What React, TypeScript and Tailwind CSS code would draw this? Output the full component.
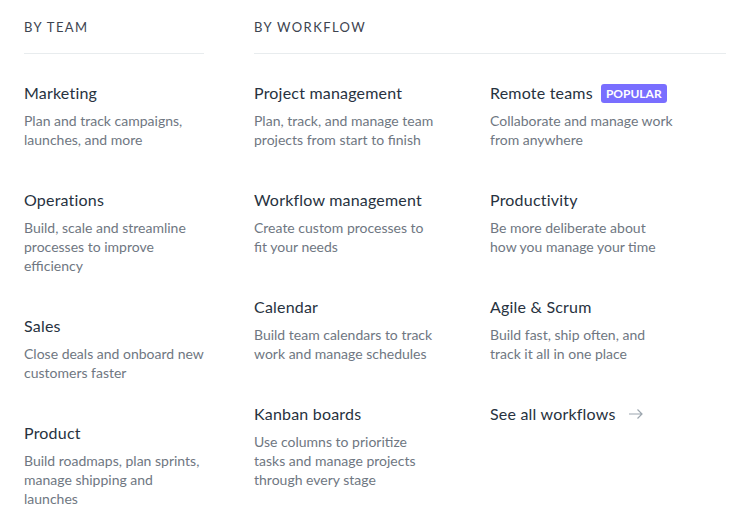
import React from 'react';

type Item = { title: string; desc: string; badge?: string };

const teams: Item[] = [
  { title: 'Marketing', desc: 'Plan and track campaigns, launches, and more' },
  { title: 'Operations', desc: 'Build, scale and streamline processes to improve efficiency' },
  { title: 'Sales', desc: 'Close deals and onboard new customers faster' },
  { title: 'Product', desc: 'Build roadmaps, plan sprints, manage shipping and launches' },
];

const workflows: Item[] = [
  { title: 'Project management', desc: 'Plan, track, and manage team projects from start to finish' },
  { title: 'Remote teams', desc: 'Collaborate and manage work from anywhere', badge: 'POPULAR' },
  { title: 'Workflow management', desc: 'Create custom processes to fit your needs' },
  { title: 'Productivity', desc: 'Be more deliberate about how you manage your time' },
  { title: 'Calendar', desc: 'Build team calendars to track work and manage schedules' },
  { title: 'Agile & Scrum', desc: 'Build fast, ship often, and track it all in one place' },
  { title: 'Kanban boards', desc: 'Use columns to prioritize tasks and manage projects through every stage' },
];

const Entry: React.FC<{ item: Item }> = ({ item }) => (
  <div>
    <div className="flex h-6 items-center gap-2">
      <span className="text-[16px] tracking-[0.2px] text-[#273240]">{item.title}</span>
      {item.badge && (
        <span className="rounded-[3px] bg-[#796eff] px-[5px] text-[12px] font-bold leading-[19px] text-white">
          {item.badge}
        </span>
      )}
    </div>
    <p className="mt-[6px] w-[184px] text-[14px] leading-[19px] text-[#6f7782]">{item.desc}</p>
  </div>
);

const Heading: React.FC<{ label: string }> = ({ label }) => (
  <div className="border-b border-[#e8ecee] pb-[17px] pt-[18px] text-[13px] leading-[18px] tracking-[1.4px] text-[#3d4450]">
    {label}
  </div>
);

export default function App() {
  return (
    <div className="flex h-[519px] w-[745px] overflow-hidden bg-white pl-6 pr-[19px] font-['Lato',sans-serif]">
      <div className="w-[180px] shrink-0">
        <Heading label="BY TEAM" />
        <div className="flex flex-col gap-[39px] pt-[27px]">
          {teams.map((t) => (
            <Entry key={t.title} item={t} />
          ))}
        </div>
      </div>
      <div className="ml-[50px] flex-1">
        <Heading label="BY WORKFLOW" />
        <div className="grid grid-cols-[236px_1fr] gap-y-[39px] pt-[27px]">
          {workflows.map((w) => (
            <Entry key={w.title} item={w} />
          ))}
          <div className="flex h-6 items-center gap-3">
            <span className="text-[16px] tracking-[0.2px] text-[#273240]">See all workflows</span>
            <svg width="16" height="12" viewBox="0 0 16 12" fill="none" stroke="#9ca6af" strokeWidth="1.2">
              <path d="M1 6h13M9.5 1.5 14 6l-4.5 4.5" />
            </svg>
          </div>
        </div>
      </div>
    </div>
  );
}
